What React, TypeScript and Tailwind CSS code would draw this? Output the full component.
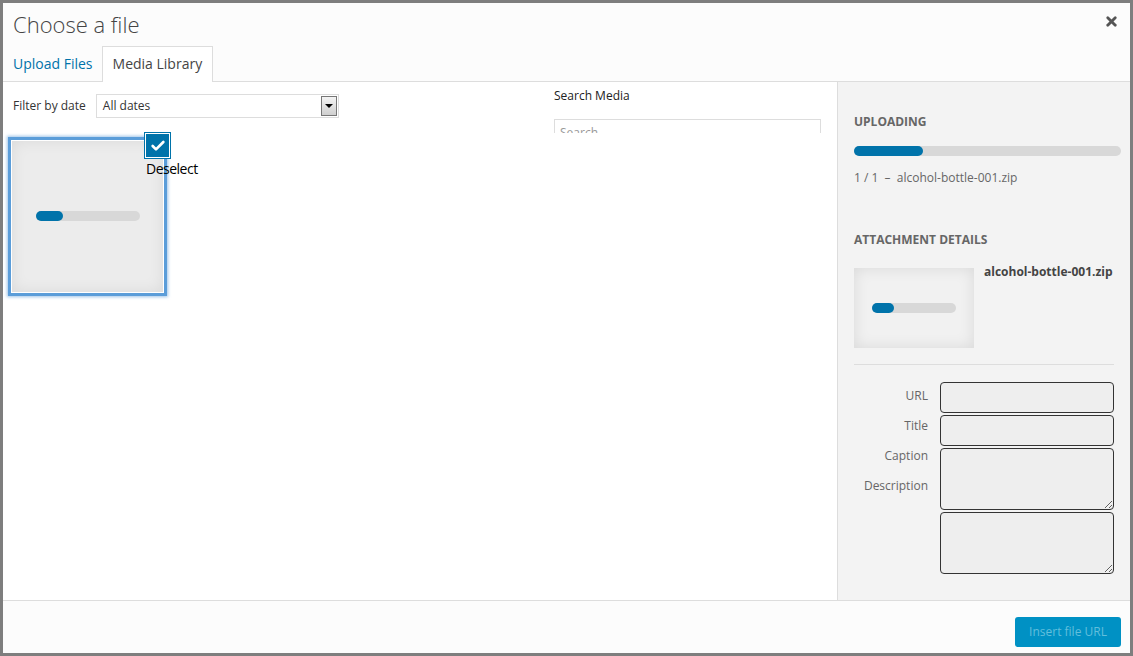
import { Check, X } from "lucide-react"

function Progress({ width, fill, className }: { width: string; fill: string; className?: string }) {
  return (
    <div className={`h-2.5 rounded-[5px] bg-[#d8d8d8] ${width} ${className ?? ""}`}>
      <div className={`h-full rounded-[5px] bg-[#0073aa] ${fill}`} />
    </div>
  )
}

function Toolbar() {
  return (
    <div className="flex h-[51px] shrink-0 items-start justify-between overflow-hidden pl-[10px] pr-4">
      <div className="mt-3 flex items-center">
        <span className="mr-[10px] text-[12px] text-[#333]">Filter by date</span>
        <div className="flex h-6 w-[243px] items-center justify-between border border-[#ddd] pl-[6px] pr-px">
          <span className="text-[12px] text-[#333]">All dates</span>
          <div className="flex h-5 w-4 items-center justify-center border border-[#777] bg-gradient-to-b from-[#f4f4f4] to-[#cfcfcf]">
            <div className="h-0 w-0 border-x-[4px] border-t-[4px] border-x-transparent border-t-black" />
          </div>
        </div>
      </div>
      <div className="mt-[5px] w-[267px]">
        <div className="text-[12px] leading-[17px] text-[#222]">Search Media</div>
        <div className="mt-[15px] h-8 border border-[#ddd] px-[5px] py-[4px] text-[12px] text-[#999]">Search</div>
      </div>
    </div>
  )
}

function Attachment() {
  return (
    <div className="relative ml-[9px] mt-2 h-[151px] w-[151px] bg-[#ececec] shadow-[inset_0_0_15px_rgba(0,0,0,0.08),0_0_0_1px_#fff,0_0_0_4px_#5b9dd9,0_0_3px_5px_rgba(91,157,217,0.6)]">
      <div className="flex h-full items-center justify-center pb-[2px]">
        <Progress width="w-[104px]" fill="w-[27px]" />
      </div>
      <button className="absolute -right-2 -top-[9px] flex h-[27px] w-[27px] items-center justify-center border border-[#0073aa] bg-[#0073aa] shadow-[inset_0_0_0_1px_#fff]">
        <Check size={16} strokeWidth={4} color="#fff" />
      </button>
      <span className="absolute left-[134px] top-[18px] text-[14px] leading-5 tracking-[-0.5px] text-black">Deselect</span>
    </div>
  )
}

function Sidebar() {
  const inputClass = "block w-[174px] rounded-[4px] border border-[#333] bg-[#eee]"
  const labels = ["URL", "Title", "Caption", "Description"]
  return (
    <aside className="w-[293px] shrink-0 border-l border-[#ddd] bg-[#f3f3f3] px-4 pt-[31px]">
      <h2 className="text-[12px] font-bold uppercase leading-[18px] text-[#666]">Uploading</h2>
      <Progress width="w-[267px]" fill="w-[69px]" className="mt-[15px]" />
      <p className="mt-[13px] whitespace-pre text-[12px] leading-[18px] text-[#666]">1 / 1  –  alcohol-bottle-001.zip</p>
      <h2 className="mt-[44px] text-[12px] font-bold uppercase leading-[18px] text-[#666]">Attachment Details</h2>
      <div className="mt-[19px] flex items-start border-b border-[#ddd] pb-4">
        <div className="flex h-20 w-[120px] items-center justify-center bg-[#f1f1f1] shadow-[inset_0_0_15px_rgba(0,0,0,0.1)]">
          <Progress width="w-[84px]" fill="w-[22px]" />
        </div>
        <div className="ml-[10px] text-[12px] font-bold leading-[8px] pt-[0px] text-[#444]">alcohol-bottle-001.zip</div>
      </div>
      <div className="mt-[17px] flex items-start">
        <div className="w-[80px] pt-[5px]">
          {labels.map((label) => (
            <div key={label} className="h-[30px] text-right text-[12px] leading-[18px] text-[#666]">
              {label}
            </div>
          ))}
        </div>
        <div className="ml-3 flex flex-col gap-[2px]">
          <input className={`${inputClass} h-[31px]`} />
          <input className={`${inputClass} h-[31px]`} />
          <textarea className={`${inputClass} h-[62px]`} />
          <textarea className={`${inputClass} h-[62px]`} />
        </div>
      </div>
    </aside>
  )
}

export default function App() {
  return (
    <div className="flex h-[656px] w-[1133px] flex-col overflow-hidden border-[3px] border-[#7e7e7e] bg-white font-['Open_Sans',sans-serif]">
      <header className="relative h-[79px] shrink-0 border-b border-[#ddd] bg-[#fcfcfc]">
        <h1 className="pl-[10px] pt-[3px] text-[22px] font-light leading-[36px] text-[#444]">Choose a file</h1>
        <button className="absolute right-[11px] top-[11px] text-[#555]">
          <X size={15} strokeWidth={4.5} />
        </button>
        <div className="absolute bottom-[-1px] left-[10px] flex items-end">
          <a className="mr-[9px] pb-[8px] text-[14px] leading-5 text-[#0073aa]">Upload Files</a>
          <a className="h-[36px] border border-b-0 border-[#ddd] bg-white px-[10px] pt-[7px] text-[14px] leading-5 text-[#444]">Media Library</a>
        </div>
      </header>
      <main className="flex min-h-0 flex-1">
        <section className="flex min-w-0 flex-1 flex-col">
          <Toolbar />
          <Attachment />
        </section>
        <Sidebar />
      </main>
      <footer className="flex h-[53px] shrink-0 items-start justify-end border-t border-[#ddd] bg-[#fcfcfc] pr-[9px] pt-4">
        <button className="h-[30px] w-[106px] rounded-[3px] bg-[#0091c4] text-[12px] text-[#62bfdc]">Insert file URL</button>
      </footer>
    </div>
  )
}
